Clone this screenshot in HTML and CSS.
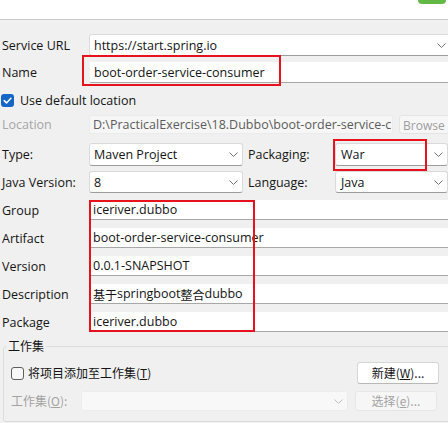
FILE: index.html
```html
<!DOCTYPE html>
<html lang="zh">
<head>
<meta charset="utf-8">
<title>New Spring Starter Project</title>
<link rel="stylesheet" href="styles.css">
</head>
<body>
<div class="topbar"><div class="pill"></div></div>
<div class="form">
  <div class="row r-url">
    <span class="lbl">Service URL</span>
    <div class="combo c-url"><span class="val">https://start.spring.io</span><svg class="chev" width="9" height="5" viewBox="0 0 9 5"><polyline points="0.5,0.5 4.5,4.5 8.5,0.5"/></svg></div>
  </div>
  <div class="row r-name">
    <span class="lbl">Name</span>
    <div class="field">boot-order-service-consumer</div>
    <div class="mark m-name"></div>
  </div>
  <div class="row r-check">
    <span class="cb on"><svg width="13" height="13" viewBox="0 0 13 13"><path d="M3.2 6.6 L5.5 8.9 L9.9 4.3"/></svg></span>
    <span class="cbtext">Use default location</span>
  </div>
  <div class="row r-loc">
    <span class="lbl dis">Location</span>
    <div class="field f-loc"><span class="loc-text">D:\PracticalExercise\18.Dubbo\boot-order-service-c</span></div>
    <div class="btn b-browse">Browse</div>
  </div>
  <div class="row r-type">
    <span class="lbl">Type:</span>
    <div class="combo c-left"><span class="val">Maven Project</span><svg class="chev" width="9" height="5" viewBox="0 0 9 5"><polyline points="0.5,0.5 4.5,4.5 8.5,0.5"/></svg></div>
    <span class="lbl2">Packaging:</span>
    <div class="combo c-right"><span class="val">War</span><svg class="chev" width="9" height="5" viewBox="0 0 9 5"><polyline points="0.5,0.5 4.5,4.5 8.5,0.5"/></svg></div>
    <div class="mark m-pack"></div>
  </div>
  <div class="row r-java">
    <span class="lbl">Java Version:</span>
    <div class="combo c-left"><span class="val">8</span><svg class="chev" width="9" height="5" viewBox="0 0 9 5"><polyline points="0.5,0.5 4.5,4.5 8.5,0.5"/></svg></div>
    <span class="lbl2">Language:</span>
    <div class="combo c-right"><span class="val">Java</span><svg class="chev" width="9" height="5" viewBox="0 0 9 5"><polyline points="0.5,0.5 4.5,4.5 8.5,0.5"/></svg></div>
  </div>
  <div class="coords">
    <div class="row r-coord"><span class="lbl">Group</span><div class="field">iceriver.dubbo</div></div>
    <div class="row r-coord"><span class="lbl">Artifact</span><div class="field">boot-order-service-consumer</div></div>
    <div class="row r-coord"><span class="lbl">Version</span><div class="field">0.0.1-SNAPSHOT</div></div>
    <div class="row r-coord"><span class="lbl">Description</span><div class="field"><span class="cjk">基于</span>springboot<span class="cjk">整合</span>dubbo</div></div>
    <div class="row r-coord"><span class="lbl">Package</span><div class="field">iceriver.dubbo</div></div>
    <div class="mark m-coords"></div>
  </div>
  <fieldset class="ws">
    <legend class="cjk">工作集</legend>
    <div class="ws-row ws-add">
      <span class="cb off"></span>
      <span class="cjk cbtext2">将项目添加至工作集(<u>T</u>)</span>
      <div class="btn b-new cjk">新建(<u>W</u>)...</div>
    </div>
    <div class="ws-row ws-sel">
      <span class="cjk ws-lbl">工作集(<u>O</u>):</span>
      <div class="combo c-ws"><span class="val"></span><svg class="chev" width="9" height="5" viewBox="0 0 9 5"><polyline points="0.5,0.5 4.5,4.5 8.5,0.5"/></svg></div>
      <div class="btn b-sel cjk">选择(<u>e</u>)...</div>
    </div>
  </fieldset>
</div>
</body>
</html>
```

FILE: styles.css
```css
* { box-sizing: border-box; margin: 0; padding: 0; }
html, body { width: 448px; height: 423px; overflow: hidden; }
body {
  background: #f0f0f0;
  font-family: "Open Sans", "Noto Sans CJK SC", sans-serif;
  font-size: 12.5px;
  color: #141414;
  line-height: 1.3;
}
.cjk { font-family: "Noto Sans CJK SC", "Open Sans", sans-serif; font-size: 12px; }

.topbar {
  height: 20px;
  background: #ffffff;
  border-bottom: 1px solid #cacaca;
  display: flex;
  justify-content: flex-end;
  padding-right: 2px;
}
.pill { width: 28px; height: 4px; background: #62b946; border-radius: 0 0 6px 6px; }

.form { padding-top: 14px; display: flex; flex-direction: column; width: 448px; }
.row { display: flex; align-items: center; position: relative; white-space: nowrap; }
.lbl { width: 89px; flex: none; padding-left: 2px; padding-top: 2px; }
.lbl.dis { color: #a6a6a6; }
.lbl2 { width: 87px; flex: none; margin-left: 5px; padding-top: 2px; }

.combo {
  display: flex;
  align-items: center;
  background: #ffffff;
  border: 1px solid #dadada;
  border-bottom-color: #9c9c9c;
  border-radius: 3px;
  padding-left: 4px;
  padding-right: 4px;
  padding-top: 2px;
  height: 100%;
  flex: none;
}
.combo .val { flex: 1; overflow: hidden; }
.chev { flex: none; margin-top: -2px; }
.chev polyline { fill: none; stroke: #707070; stroke-width: 1; }

.field {
  flex: 1;
  height: 100%;
  background: #ffffff;
  border-bottom: 1px solid #a8a8a8;
  padding-left: 4px;
  padding-top: 2px;
  display: flex;
  align-items: center;
  overflow: hidden;
  margin-right: -4px;
}

.r-url { height: 22px; }
.c-url { width: 362px; margin-right: -4px; }
.r-name { height: 21px; margin-top: 6px; }
.r-name .field { margin-left: 1px; }

.r-check { height: 14px; margin-top: 10px; padding-left: 1px; }
.cb { flex: none; width: 13px; height: 13px; border-radius: 3px; display: block; }
.cb.on { background: #1467c6; }
.cb.on svg { display: block; }
.cb.on path { fill: none; stroke: #ffffff; stroke-width: 1.5; stroke-linecap: round; stroke-linejoin: round; }
.cbtext { margin-left: 6px; padding-top: 2px; }

.r-loc { height: 19px; margin-top: 8px; }
.f-loc {
  flex: none;
  width: 304px;
  margin-right: 0;
  background: #f6f6f6;
  border: 1px solid #ebebeb;
  border-radius: 2px;
  color: #5c5c5c;
  padding-left: 3px;
}
.loc-text { display: block; overflow: hidden; }
.btn {
  display: flex;
  align-items: center;
  justify-content: center;
  border-radius: 3px;
  flex: none;
}
.b-browse {
  margin-left: 6px;
  height: 19px;
  width: 56px;
  justify-content: flex-start;
  padding-left: 3px;
  padding-top: 2px;
  font-size: 12px;
  background: #f6f6f6;
  border: 1px solid #e4e4e4;
  color: #9d9d9d;
}

.r-type { height: 23px; margin-top: 9px; }
.r-java { height: 22px; margin-top: 5px; }
.c-left { width: 154px; }
.c-right { width: 113px; }
.c-right .val { padding-left: 1px; }

.coords { position: relative; display: flex; flex-direction: column; gap: 8px; margin-top: 7px; }
.r-coord { height: 20px; }

.mark { position: absolute; border: 2px solid #e8121c; pointer-events: none; }
.m-name { left: 82px; top: -7px; width: 199px; height: 31px; }
.m-pack { left: 333px; top: -4px; width: 94px; height: 32px; }
.m-coords { left: 89px; top: 0px; width: 166px; height: 132px; }

.ws {
  margin-top: 5px;
  margin-left: 3px;
  width: 452px;
  height: 85px;
  border: 1px solid #dcdcdc;
  border-radius: 3px;
  padding: 0;
}
.ws legend { margin-left: 2px; padding: 0 2px; line-height: 18px; color: #141414; }
.ws-row { display: flex; align-items: center; padding-left: 7px; }
.ws-add { height: 22px; margin-top: 7px; }
.cb.off { width: 13px; height: 13px; border: 1px solid #5e5e5e; border-radius: 3px; background: #f7f7f7; }
.cbtext2 { margin-left: 4px; }
.b-new {
  margin-left: auto;
  margin-right: 15px;
  width: 82px;
  height: 22px;
  background: #ffffff;
  border: 1px solid #d6d6d6;
  border-bottom-color: #b8b8b8;
  color: #141414;
}
.ws-sel { height: 20px; margin-top: 7px; }
.ws-lbl { width: 70px; flex: none; color: #a3a3a3; }
.c-ws {
  width: 267px;
  background: #f8f8f8;
  border-color: #ececec;
  border-bottom-color: #ececec;
}
.c-ws .chev polyline { stroke: #bdbdbd; }
.b-sel {
  margin-left: 7px;
  width: 82px;
  height: 20px;
  background: #f6f6f6;
  border: 1px solid #e6e6e6;
  color: #a3a3a3;
}
```
